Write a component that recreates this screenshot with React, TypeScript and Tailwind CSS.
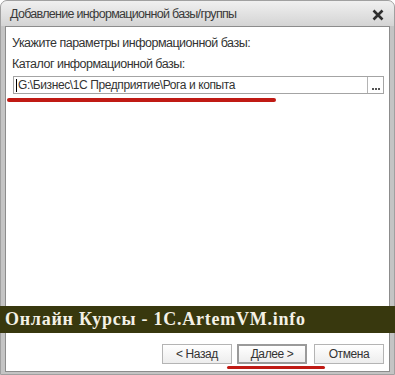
import { ReactNode } from 'react'

function DlgButton({ children, primary }: { children: ReactNode; primary?: boolean }) {
  return (
    <div
      className={`w-[70px] h-[20px] flex items-center justify-center text-[12px] tracking-[-0.4px] text-[#333] bg-gradient-to-b from-white to-[#ededed] ${
        primary ? 'border-2 border-[#9a9a9a]' : 'border border-[#b4b4b4]'
      }`}
    >
      {children}
    </div>
  )
}

export default function App() {
  return (
    <div
      className="w-[395px] h-[375px] bg-white relative overflow-hidden"
      style={{ fontFamily: '"Liberation Sans", Arial, sans-serif' }}
    >
      <div className="w-full h-full flex flex-col rounded-t-[7px] bg-[#c4c4c4] border border-[#a0a0a0]">
        {/* title bar */}
        <div className="h-[25px] flex items-center justify-between pl-[9px] pr-[10px] rounded-t-[6px] bg-gradient-to-b from-[#f0f0f0] to-[#d4d4d4]">
          <span className="text-[12.5px] tracking-[-0.7px] text-[#3a3a3a] pt-[2px]">Добавление информационной базы/группы</span>
          <svg width="12" height="12" viewBox="0 0 12 12" className="mt-[3px]">
            <path d="M1.5 1.5 L10.5 10.5 M10.5 1.5 L1.5 10.5" stroke="#2e2e2e" strokeWidth="2.6" />
          </svg>
        </div>

        {/* body */}
        <div className="flex-1 mx-[4px] mb-[2px] bg-white border border-[#8c8c8c] flex flex-col text-[#333] tracking-[-0.5px]">
          <div className="pt-[9px] pl-[6px] text-[12.5px] leading-[14px]">Укажите параметры информационной базы:</div>
          <div className="pt-[7px] pl-[6px] text-[12.5px] leading-[14px]">Каталог информационной базы:</div>
          <div className="mt-[5px] ml-[7px] mr-[5px] h-[18px] flex border border-[#a4a4a4]">
            <div className="flex-1 flex items-center pl-[2px] text-[12px] tracking-[-0.4px] text-[#333]">
              <span className="w-px h-[13px] bg-black mr-[1px]" />
              G:\Бизнес\1С Предприятие\Рога и копыта
            </div>
            <div className="w-[16px] border-l border-[#b4b4b4] flex items-end justify-center gap-[1px] pb-[3px]">
              <span className="w-[2px] h-[2px] bg-[#555]" />
              <span className="w-[2px] h-[2px] bg-[#555]" />
              <span className="w-[2px] h-[2px] bg-[#555]" />
            </div>
          </div>
          <div className="flex-1" />
          <div className="flex justify-end items-center pr-[5px] pb-[7px] gap-[5px]">
            <DlgButton>&lt; Назад</DlgButton>
            <DlgButton primary>Далее &gt;</DlgButton>
            <div className="ml-[2px]">
              <DlgButton>Отмена</DlgButton>
            </div>
          </div>
        </div>
      </div>

      {/* annotations */}
      <div className="absolute left-[7px] top-[98px] w-[269px] h-[4px] rounded-full bg-[#c01a14]" />
      <div className="absolute left-[227px] top-[366px] w-[98px] h-[3px] rounded-full bg-[#c01a14]" />

      {/* watermark banner */}
      <div className="absolute left-0 top-[306px] w-full h-[27px] bg-[#38380e] flex items-center pl-[5px]">
        <span
          className="text-[18px] font-bold tracking-[0.75px] text-[#f4f1e6] whitespace-pre"
          style={{ fontFamily: '"Liberation Serif", "Times New Roman", serif' }}
        >
          Онлайн Курсы - 1C.ArtemVM.info
        </span>
      </div>
    </div>
  )
}
